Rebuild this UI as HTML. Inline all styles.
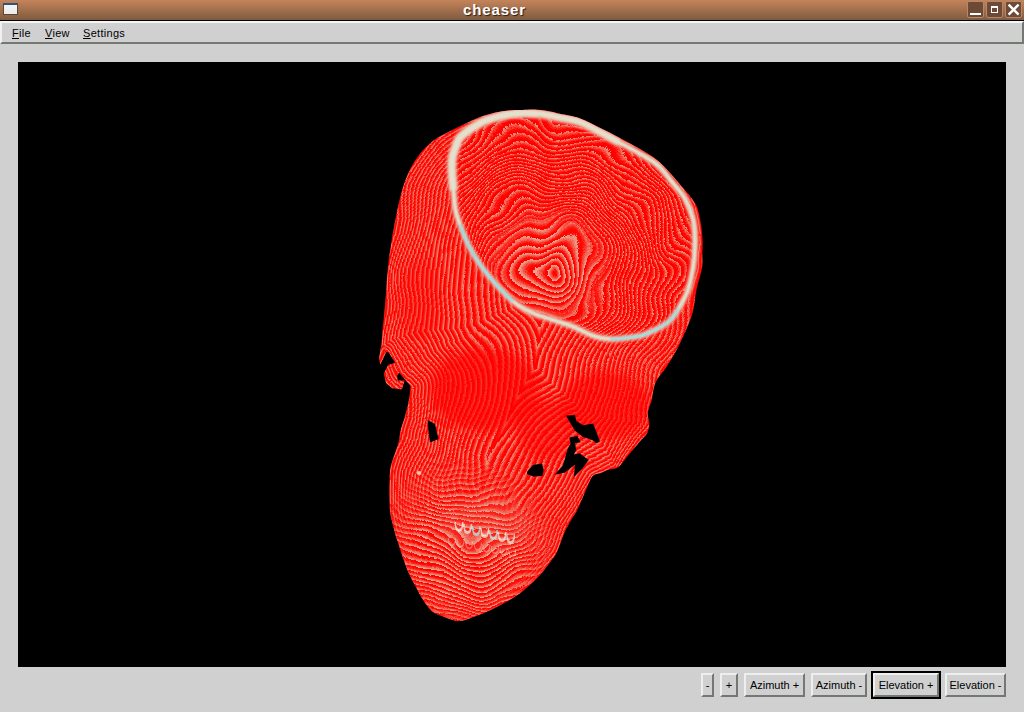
<!DOCTYPE html>
<html><head><meta charset="utf-8">
<style>
*{margin:0;padding:0;box-sizing:border-box}
html,body{width:1024px;height:712px;overflow:hidden;background:#d0d0d0;font-family:"Liberation Sans",sans-serif;position:relative}
.abs{position:absolute}
#title{left:0;top:0;width:1024px;height:20px;background:linear-gradient(#c4845a,#7e5a40)}
#tline{left:0;top:20px;width:1024px;height:1px;background:#000}
#ticon{left:3px;top:3px;width:15px;height:12px;background:linear-gradient(#f4f4f4,#ececec);border:1px solid #5a4634;border-top:2px solid #2c5480}
#ttext{left:463px;top:1px;text-align:left;color:#fff;font-weight:bold;font-size:15px;letter-spacing:0.9px;line-height:18px;text-shadow:1px 1px 1px #2a1a10}
.tb{top:1px;width:17px;height:17px;background:#6c4a36;border:1px solid #b8876a;border-radius:2px}
#menubar{left:0;top:21px;width:1024px;height:23px;background:#d0d0d0;border-top:2px solid #f4f4f4;border-left:2px solid #f0f0f0;border-bottom:2px solid #737873;border-right:2px solid #737873}
.mi{top:26px;font-size:11px;color:#000;line-height:14px;letter-spacing:0.3px}
.mi u{text-decoration:underline;text-underline-offset:1px;text-decoration-thickness:1px}
#canvas{left:18px;top:62px;width:988px;height:605px;background:#000;overflow:hidden}
.btn{top:673px;height:24px;background:#d0d0d0;border-top:2px solid #eeeeee;border-left:2px solid #eeeeee;border-bottom:2px solid #737873;border-right:2px solid #737873;font-size:11px;color:#000;text-align:center;line-height:20px;white-space:nowrap}
#focus{left:871px;top:671px;width:70px;height:28px;border:2px solid #000}
</style></head><body>
<div class="abs" id="title"></div>
<div class="abs" id="tline"></div>
<div class="abs" id="ticon"></div>
<div class="abs" id="ttext">cheaser</div>
<div class="abs tb" style="left:967px"><div class="abs" style="left:2px;top:11px;width:11px;height:2px;background:#fff"></div></div>
<div class="abs tb" style="left:986px"><div class="abs" style="left:4px;top:4px;width:7px;height:7px;border:1.5px solid #fff;border-top-width:2px"></div></div>
<div class="abs tb" style="left:1005px"><svg class="abs" style="left:0;top:0" width="15" height="15"><path d="M2.6 2.6 L12.6 12.6 M12.6 2.6 L2.6 12.6" stroke="#fff" stroke-width="2.4"/></svg></div>
<div class="abs" id="menubar"></div>
<div class="abs mi" style="left:12px"><u>F</u>ile</div>
<div class="abs mi" style="left:45px"><u>V</u>iew</div>
<div class="abs mi" style="left:83px"><u>S</u>ettings</div>
<div class="abs" id="canvas"></div>
<!-- SKULL --><svg class="abs" style="left:0;top:0" width="1024" height="712" viewBox="0 0 1024 712">
<defs>
<path id="ol" d="M522.5 110.0 C527.4 109.9 532.3 109.4 537.2 109.7 C542.1 110.0 548.0 111.0 551.8 111.7 C555.6 112.4 555.4 112.7 560.0 113.8 C564.6 114.9 573.2 115.9 579.7 118.2 C586.2 120.5 592.8 124.3 599.3 127.5 C605.8 130.7 612.4 134.0 619.0 137.4 C625.6 140.8 632.2 144.3 638.7 148.2 C645.2 152.1 651.5 155.1 658.3 161.0 C665.1 166.9 673.2 176.4 679.3 183.4 C685.4 190.4 691.5 197.1 695.0 203.0 C698.5 208.9 698.8 212.9 700.0 218.8 C701.2 224.7 702.1 232.5 702.5 238.5 C702.9 244.5 702.4 250.1 702.3 255.0 C702.2 259.9 703.0 262.2 702.0 268.0 C701.0 273.8 697.7 283.8 696.4 290.0 C695.1 296.2 695.0 300.8 694.1 305.4 C693.2 310.0 692.8 312.6 691.0 317.8 C689.2 323.0 685.9 330.6 683.3 336.3 C680.7 342.0 678.4 346.7 675.6 351.8 C672.8 356.9 669.6 362.1 666.3 367.2 C662.9 372.3 657.9 377.2 655.5 382.7 C653.1 388.2 652.7 396.0 651.7 400.0 C650.7 404.0 649.9 404.4 649.3 406.8 C648.6 409.2 647.8 411.2 647.8 414.2 C647.8 417.1 649.4 421.3 649.3 424.5 C649.2 427.7 648.3 430.9 647.1 433.3 C645.9 435.8 644.3 436.5 642.0 439.2 C639.7 441.9 635.8 446.4 633.1 449.6 C630.4 452.8 628.2 455.4 625.7 458.4 C623.2 461.3 621.0 465.4 618.3 467.3 C615.6 469.2 612.5 468.5 609.5 469.5 C606.5 470.5 603.3 472.2 600.6 473.2 C597.9 474.2 595.3 473.7 593.3 475.4 C591.3 477.1 590.3 480.4 588.8 483.5 C587.3 486.6 586.3 489.4 584.4 493.8 C582.5 498.2 580.2 504.2 577.2 510.0 C574.2 515.8 569.8 521.6 566.4 528.6 C563.0 535.6 559.7 546.4 557.1 551.8 C554.5 557.2 554.1 556.9 551.0 561.0 C547.9 565.1 543.8 571.1 538.6 576.5 C533.5 581.9 526.3 588.5 520.1 593.2 C513.9 597.9 506.6 601.7 501.3 604.6 C496.1 607.5 492.8 609.0 488.6 610.9 C484.4 612.8 480.1 614.4 475.9 616.0 C471.7 617.6 466.9 619.7 463.3 620.4 C459.7 621.1 458.0 621.1 454.4 620.4 C450.8 619.7 445.6 617.6 441.8 616.0 C438.0 614.4 434.8 613.6 431.6 610.9 C428.4 608.1 425.5 603.7 422.8 599.5 C420.1 595.3 417.7 590.5 415.2 585.6 C412.7 580.8 410.2 576.7 407.6 570.4 C405.0 564.1 402.0 555.0 399.7 548.0 C397.4 541.0 395.4 534.9 393.8 528.3 C392.2 521.7 390.5 517.8 389.8 508.6 C389.1 499.4 389.3 481.5 389.8 473.3 C390.3 465.1 391.3 464.8 392.8 459.5 C394.3 454.2 397.4 446.7 398.7 441.8 C400.0 436.9 399.6 434.1 400.6 430.0 C401.6 425.9 403.4 421.7 404.7 417.0 C406.0 412.3 407.7 406.0 408.6 401.8 L410.0 392.0 L410.5 386.0 L404.5 379.0 L399.5 373.0 L394.4 361.5 L388.7 352.4 L386.3 352.0 L380.3 364.7 L378.9 358.7 L380.3 351.0 C380.7 348.6 381.0 347.2 381.4 344.0 C381.8 340.8 381.8 338.7 382.4 331.7 C383.0 324.7 384.5 311.8 385.3 302.0 C386.1 292.2 386.4 282.5 387.4 272.7 C388.4 262.9 389.3 254.8 391.2 243.2 C393.1 231.6 396.1 214.4 398.8 203.0 C401.5 191.6 404.0 183.1 407.4 175.0 C410.8 166.9 414.8 160.5 419.2 154.7 C423.6 148.9 429.0 143.9 434.0 140.0 C439.0 136.1 444.3 134.1 449.3 131.5 C454.3 128.9 459.1 126.5 464.0 124.2 C468.9 121.9 473.7 119.5 478.6 117.6 C483.5 115.7 488.3 114.1 493.2 112.9 C498.1 111.7 503.0 111.0 507.9 110.5 C512.8 110.0 517.6 110.1 522.5 110.0 Z" fill="none" stroke-linejoin="round"/>
<clipPath id="sk"><path d="M522.5 110.0 C527.4 109.9 532.3 109.4 537.2 109.7 C542.1 110.0 548.0 111.0 551.8 111.7 C555.6 112.4 555.4 112.7 560.0 113.8 C564.6 114.9 573.2 115.9 579.7 118.2 C586.2 120.5 592.8 124.3 599.3 127.5 C605.8 130.7 612.4 134.0 619.0 137.4 C625.6 140.8 632.2 144.3 638.7 148.2 C645.2 152.1 651.5 155.1 658.3 161.0 C665.1 166.9 673.2 176.4 679.3 183.4 C685.4 190.4 691.5 197.1 695.0 203.0 C698.5 208.9 698.8 212.9 700.0 218.8 C701.2 224.7 702.1 232.5 702.5 238.5 C702.9 244.5 702.4 250.1 702.3 255.0 C702.2 259.9 703.0 262.2 702.0 268.0 C701.0 273.8 697.7 283.8 696.4 290.0 C695.1 296.2 695.0 300.8 694.1 305.4 C693.2 310.0 692.8 312.6 691.0 317.8 C689.2 323.0 685.9 330.6 683.3 336.3 C680.7 342.0 678.4 346.7 675.6 351.8 C672.8 356.9 669.6 362.1 666.3 367.2 C662.9 372.3 657.9 377.2 655.5 382.7 C653.1 388.2 652.7 396.0 651.7 400.0 C650.7 404.0 649.9 404.4 649.3 406.8 C648.6 409.2 647.8 411.2 647.8 414.2 C647.8 417.1 649.4 421.3 649.3 424.5 C649.2 427.7 648.3 430.9 647.1 433.3 C645.9 435.8 644.3 436.5 642.0 439.2 C639.7 441.9 635.8 446.4 633.1 449.6 C630.4 452.8 628.2 455.4 625.7 458.4 C623.2 461.3 621.0 465.4 618.3 467.3 C615.6 469.2 612.5 468.5 609.5 469.5 C606.5 470.5 603.3 472.2 600.6 473.2 C597.9 474.2 595.3 473.7 593.3 475.4 C591.3 477.1 590.3 480.4 588.8 483.5 C587.3 486.6 586.3 489.4 584.4 493.8 C582.5 498.2 580.2 504.2 577.2 510.0 C574.2 515.8 569.8 521.6 566.4 528.6 C563.0 535.6 559.7 546.4 557.1 551.8 C554.5 557.2 554.1 556.9 551.0 561.0 C547.9 565.1 543.8 571.1 538.6 576.5 C533.5 581.9 526.3 588.5 520.1 593.2 C513.9 597.9 506.6 601.7 501.3 604.6 C496.1 607.5 492.8 609.0 488.6 610.9 C484.4 612.8 480.1 614.4 475.9 616.0 C471.7 617.6 466.9 619.7 463.3 620.4 C459.7 621.1 458.0 621.1 454.4 620.4 C450.8 619.7 445.6 617.6 441.8 616.0 C438.0 614.4 434.8 613.6 431.6 610.9 C428.4 608.1 425.5 603.7 422.8 599.5 C420.1 595.3 417.7 590.5 415.2 585.6 C412.7 580.8 410.2 576.7 407.6 570.4 C405.0 564.1 402.0 555.0 399.7 548.0 C397.4 541.0 395.4 534.9 393.8 528.3 C392.2 521.7 390.5 517.8 389.8 508.6 C389.1 499.4 389.3 481.5 389.8 473.3 C390.3 465.1 391.3 464.8 392.8 459.5 C394.3 454.2 397.4 446.7 398.7 441.8 C400.0 436.9 399.6 434.1 400.6 430.0 C401.6 425.9 403.4 421.7 404.7 417.0 C406.0 412.3 407.7 406.0 408.6 401.8 L410.0 392.0 L410.5 386.0 L404.5 379.0 L399.5 373.0 L394.4 361.5 L388.7 352.4 L386.3 352.0 L380.3 364.7 L378.9 358.7 L380.3 351.0 C380.7 348.6 381.0 347.2 381.4 344.0 C381.8 340.8 381.8 338.7 382.4 331.7 C383.0 324.7 384.5 311.8 385.3 302.0 C386.1 292.2 386.4 282.5 387.4 272.7 C388.4 262.9 389.3 254.8 391.2 243.2 C393.1 231.6 396.1 214.4 398.8 203.0 C401.5 191.6 404.0 183.1 407.4 175.0 C410.8 166.9 414.8 160.5 419.2 154.7 C423.6 148.9 429.0 143.9 434.0 140.0 C439.0 136.1 444.3 134.1 449.3 131.5 C454.3 128.9 459.1 126.5 464.0 124.2 C468.9 121.9 473.7 119.5 478.6 117.6 C483.5 115.7 488.3 114.1 493.2 112.9 C498.1 111.7 503.0 111.0 507.9 110.5 C512.8 110.0 517.6 110.1 522.5 110.0 Z"/><path d="M388.0 365.0 L394.4 363.0 L398.0 364.4 L399.5 372.0 L398.6 373.5 L397.0 376.0 L397.9 380.5 L404.9 380.5 L404.2 382.0 L402.0 389.6 L392.2 388.2 L386.0 383.3 L383.8 373.5 Z"/></clipPath>
<radialGradient id="rg1" gradientUnits="userSpaceOnUse" cx="548" cy="270" r="7" spreadMethod="repeat"><stop offset="0" stop-color="#ff0000"/><stop offset="0.3" stop-color="#ff0600"/><stop offset="0.62" stop-color="#f65444"/><stop offset="0.9" stop-color="#eb9c88"/><stop offset="1" stop-color="#e6ae96"/></radialGradient>
<radialGradient id="rg3" gradientUnits="userSpaceOnUse" cx="548" cy="270" r="4.5" spreadMethod="repeat"><stop offset="0" stop-color="#ff0000"/><stop offset="0.4" stop-color="#ff0400"/><stop offset="0.75" stop-color="#f8483a"/><stop offset="1" stop-color="#ec9480"/></radialGradient>
<radialGradient id="mk" gradientUnits="userSpaceOnUse" cx="548" cy="268" r="65"><stop offset="0" stop-color="#fff"/><stop offset="0.55" stop-color="#fff"/><stop offset="1" stop-color="#000"/></radialGradient>
<radialGradient id="rg4" gradientUnits="userSpaceOnUse" cx="470" cy="420" r="5.5" spreadMethod="repeat"><stop offset="0" stop-color="#ff0000"/><stop offset="0.3" stop-color="#ff0600"/><stop offset="0.62" stop-color="#f65444"/><stop offset="0.9" stop-color="#eb9c88"/><stop offset="1" stop-color="#e6ae96"/></radialGradient>
<radialGradient id="mk2" gradientUnits="userSpaceOnUse" cx="465" cy="550" r="95"><stop offset="0" stop-color="#fff"/><stop offset="0.5" stop-color="#fff"/><stop offset="1" stop-color="#000"/></radialGradient>
<mask id="jm" maskUnits="userSpaceOnUse" x="340" y="80" width="400" height="580"><rect x="340" y="80" width="400" height="580" fill="url(#mk2)"/></mask>
<mask id="cm" maskUnits="userSpaceOnUse" x="340" y="80" width="400" height="580"><rect x="340" y="80" width="400" height="580" fill="url(#mk)"/></mask>
<radialGradient id="rg2" gradientUnits="userSpaceOnUse" cx="560" cy="900" r="4" spreadMethod="repeat"><stop offset="0" stop-color="#ff0000"/><stop offset="0.45" stop-color="#ff0400"/><stop offset="0.8" stop-color="#f8483a"/><stop offset="1" stop-color="#ee8c78"/></radialGradient>
<filter id="wv" x="360" y="90" width="360" height="550" filterUnits="userSpaceOnUse" color-interpolation-filters="sRGB">
<feTurbulence type="fractalNoise" baseFrequency="0.015" numOctaves="2" seed="5" result="n"/>
<feDisplacementMap in="SourceGraphic" in2="n" scale="50" xChannelSelector="R" yChannelSelector="G"/>
</filter>
<filter id="wv2" x="360" y="90" width="360" height="550" filterUnits="userSpaceOnUse" color-interpolation-filters="sRGB">
<feTurbulence type="fractalNoise" baseFrequency="0.01" numOctaves="2" seed="11" result="n"/>
<feDisplacementMap in="SourceGraphic" in2="n" scale="36" xChannelSelector="R" yChannelSelector="G"/>
</filter>
<filter id="bl1" x="-50%" y="-50%" width="200%" height="200%"><feGaussianBlur stdDeviation="1"/></filter>
<filter id="bl05" x="-50%" y="-50%" width="200%" height="200%"><feGaussianBlur stdDeviation="0.7"/></filter>
<filter id="bl4" x="-50%" y="-50%" width="200%" height="200%"><feGaussianBlur stdDeviation="5"/></filter>
<clipPath id="cr"><path d="M515.2 113.6 C522.5 112.9 529.9 113.0 537.2 113.6 C544.5 114.2 551.9 115.9 559.0 117.3 C566.1 118.7 573.3 119.6 580.0 122.0 C586.7 124.4 592.5 128.1 599.0 131.5 C605.5 134.9 612.4 138.7 619.0 142.3 C625.6 145.9 632.2 149.2 638.7 153.0 C645.2 156.8 652.5 160.6 658.0 165.4 C663.5 170.2 667.5 176.4 672.0 182.0 C676.5 187.6 681.7 192.9 685.2 199.0 C688.7 205.1 691.4 212.2 693.0 218.8 C694.6 225.4 694.8 232.5 695.0 238.5 C695.2 244.5 694.8 250.1 694.5 255.0 C694.2 259.9 694.1 262.2 693.0 268.0 C691.9 273.8 690.4 283.2 688.0 290.0 C685.6 296.8 681.8 303.3 678.7 308.5 C675.6 313.7 672.8 317.8 669.4 321.0 C666.0 324.2 663.0 325.7 658.6 328.0 C654.2 330.3 648.4 333.4 643.2 335.0 C638.1 336.6 633.2 337.1 627.7 337.8 C622.2 338.5 615.7 339.3 610.0 339.0 C604.3 338.7 600.1 338.2 593.7 336.0 C587.3 333.8 578.9 328.9 571.5 326.0 C564.1 323.1 556.3 321.0 549.6 318.7 C542.9 316.4 537.4 315.2 531.3 312.3 C525.2 309.4 519.1 306.2 513.0 301.3 C506.9 296.4 500.3 289.1 494.8 283.0 C489.3 276.9 484.5 270.9 480.2 264.8 C475.9 258.7 472.6 253.2 469.2 246.5 C465.8 239.8 462.3 230.7 460.0 224.6 C457.7 218.5 456.6 215.8 455.5 210.0 C454.4 204.2 454.1 196.2 453.5 190.0 C452.9 183.8 452.2 177.7 452.0 172.5 C451.8 167.3 451.5 163.0 452.2 158.6 C452.9 154.2 454.5 149.7 456.0 146.0 C457.5 142.3 457.2 140.3 461.0 136.6 C464.8 132.9 473.2 127.1 478.6 124.0 C484.0 120.9 487.1 119.7 493.2 118.0 C499.3 116.3 507.9 114.3 515.2 113.6 Z"/></clipPath>
</defs>
<g clip-path="url(#sk)">
<g filter="url(#wv2)">
<rect x="340" y="80" width="400" height="580" fill="#f64c3c"/>
<use href="#ol" stroke="#ff0000" stroke-width="393.8"/>
<use href="#ol" stroke="#ec8e7a" stroke-width="391.0"/>
<use href="#ol" stroke="#f65040" stroke-width="388.2"/>
<use href="#ol" stroke="#ff1a10" stroke-width="385.4"/>
<use href="#ol" stroke="#ff0400" stroke-width="382.6"/>
<use href="#ol" stroke="#ff0000" stroke-width="379.8"/>
<use href="#ol" stroke="#ec8e7a" stroke-width="377.0"/>
<use href="#ol" stroke="#f65040" stroke-width="374.2"/>
<use href="#ol" stroke="#ff1a10" stroke-width="371.4"/>
<use href="#ol" stroke="#ff0400" stroke-width="368.6"/>
<use href="#ol" stroke="#ff0000" stroke-width="365.8"/>
<use href="#ol" stroke="#ec8e7a" stroke-width="363.0"/>
<use href="#ol" stroke="#f65040" stroke-width="360.2"/>
<use href="#ol" stroke="#ff1a10" stroke-width="357.4"/>
<use href="#ol" stroke="#ff0400" stroke-width="354.6"/>
<use href="#ol" stroke="#ff0000" stroke-width="351.8"/>
<use href="#ol" stroke="#ec8e7a" stroke-width="349.0"/>
<use href="#ol" stroke="#f65040" stroke-width="346.2"/>
<use href="#ol" stroke="#ff1a10" stroke-width="343.4"/>
<use href="#ol" stroke="#ff0400" stroke-width="340.6"/>
<use href="#ol" stroke="#ff0000" stroke-width="337.8"/>
<use href="#ol" stroke="#ec8e7a" stroke-width="335.0"/>
<use href="#ol" stroke="#f65040" stroke-width="332.2"/>
<use href="#ol" stroke="#ff1a10" stroke-width="329.4"/>
<use href="#ol" stroke="#ff0400" stroke-width="326.6"/>
<use href="#ol" stroke="#ff0000" stroke-width="323.8"/>
<use href="#ol" stroke="#ec8e7a" stroke-width="321.1"/>
<use href="#ol" stroke="#f65040" stroke-width="318.3"/>
<use href="#ol" stroke="#ff1a10" stroke-width="315.5"/>
<use href="#ol" stroke="#ff0400" stroke-width="312.8"/>
<use href="#ol" stroke="#ff0000" stroke-width="310.0"/>
<use href="#ol" stroke="#ec8e7a" stroke-width="307.3"/>
<use href="#ol" stroke="#f65040" stroke-width="304.6"/>
<use href="#ol" stroke="#ff1a10" stroke-width="301.8"/>
<use href="#ol" stroke="#ff0400" stroke-width="299.1"/>
<use href="#ol" stroke="#ff0000" stroke-width="296.4"/>
<use href="#ol" stroke="#ec8e7a" stroke-width="293.7"/>
<use href="#ol" stroke="#f65040" stroke-width="291.1"/>
<use href="#ol" stroke="#ff1a10" stroke-width="288.4"/>
<use href="#ol" stroke="#ff0400" stroke-width="285.7"/>
<use href="#ol" stroke="#ff0000" stroke-width="283.0"/>
<use href="#ol" stroke="#ec8e7a" stroke-width="280.4"/>
<use href="#ol" stroke="#f65040" stroke-width="277.8"/>
<use href="#ol" stroke="#ff1a10" stroke-width="275.2"/>
<use href="#ol" stroke="#ff0400" stroke-width="272.5"/>
<use href="#ol" stroke="#ff0000" stroke-width="269.9"/>
<use href="#ol" stroke="#ec8e7a" stroke-width="267.3"/>
<use href="#ol" stroke="#f65040" stroke-width="264.8"/>
<use href="#ol" stroke="#ff1a10" stroke-width="262.2"/>
<use href="#ol" stroke="#ff0400" stroke-width="259.6"/>
<use href="#ol" stroke="#ff0000" stroke-width="257.0"/>
<use href="#ol" stroke="#ec8e7a" stroke-width="254.5"/>
<use href="#ol" stroke="#f65040" stroke-width="252.0"/>
<use href="#ol" stroke="#ff1a10" stroke-width="249.5"/>
<use href="#ol" stroke="#ff0400" stroke-width="246.9"/>
<use href="#ol" stroke="#ff0000" stroke-width="244.4"/>
<use href="#ol" stroke="#ec8e7a" stroke-width="241.9"/>
<use href="#ol" stroke="#f65040" stroke-width="239.4"/>
<use href="#ol" stroke="#ff1a10" stroke-width="237.0"/>
<use href="#ol" stroke="#ff0400" stroke-width="234.5"/>
<use href="#ol" stroke="#ff0000" stroke-width="232.0"/>
<use href="#ol" stroke="#ec8e7a" stroke-width="229.6"/>
<use href="#ol" stroke="#f65040" stroke-width="227.1"/>
<use href="#ol" stroke="#ff1a10" stroke-width="224.7"/>
<use href="#ol" stroke="#ff0400" stroke-width="222.3"/>
<use href="#ol" stroke="#ff0000" stroke-width="219.8"/>
<use href="#ol" stroke="#ec8e7a" stroke-width="217.5"/>
<use href="#ol" stroke="#f65040" stroke-width="215.1"/>
<use href="#ol" stroke="#ff1a10" stroke-width="212.7"/>
<use href="#ol" stroke="#ff0400" stroke-width="210.3"/>
<use href="#ol" stroke="#ff0000" stroke-width="207.9"/>
<use href="#ol" stroke="#ec8e7a" stroke-width="205.6"/>
<use href="#ol" stroke="#f65040" stroke-width="203.2"/>
<use href="#ol" stroke="#ff1a10" stroke-width="200.9"/>
<use href="#ol" stroke="#ff0400" stroke-width="198.6"/>
<use href="#ol" stroke="#ff0000" stroke-width="196.2"/>
<use href="#ol" stroke="#ec8e7a" stroke-width="194.0"/>
<use href="#ol" stroke="#f65040" stroke-width="191.7"/>
<use href="#ol" stroke="#ff1a10" stroke-width="189.4"/>
<use href="#ol" stroke="#ff0400" stroke-width="187.1"/>
<use href="#ol" stroke="#ff0000" stroke-width="184.8"/>
<use href="#ol" stroke="#ec8e7a" stroke-width="182.6"/>
<use href="#ol" stroke="#f65040" stroke-width="180.3"/>
<use href="#ol" stroke="#ff1a10" stroke-width="178.1"/>
<use href="#ol" stroke="#ff0400" stroke-width="175.8"/>
<use href="#ol" stroke="#ff0000" stroke-width="173.6"/>
<use href="#ol" stroke="#ec8e7a" stroke-width="171.4"/>
<use href="#ol" stroke="#f65040" stroke-width="169.2"/>
<use href="#ol" stroke="#ff1a10" stroke-width="167.0"/>
<use href="#ol" stroke="#ff0400" stroke-width="164.8"/>
<use href="#ol" stroke="#ff0000" stroke-width="162.6"/>
<use href="#ol" stroke="#ec8e7a" stroke-width="160.5"/>
<use href="#ol" stroke="#f65040" stroke-width="158.4"/>
<use href="#ol" stroke="#ff1a10" stroke-width="156.2"/>
<use href="#ol" stroke="#ff0400" stroke-width="154.1"/>
<use href="#ol" stroke="#ff0000" stroke-width="151.9"/>
<use href="#ol" stroke="#ec8e7a" stroke-width="149.8"/>
<use href="#ol" stroke="#f65040" stroke-width="147.7"/>
<use href="#ol" stroke="#ff1a10" stroke-width="145.6"/>
<use href="#ol" stroke="#ff0400" stroke-width="143.5"/>
<use href="#ol" stroke="#ff0000" stroke-width="141.4"/>
<use href="#ol" stroke="#ec8e7a" stroke-width="139.4"/>
<use href="#ol" stroke="#f65040" stroke-width="137.3"/>
<use href="#ol" stroke="#ff1a10" stroke-width="135.3"/>
<use href="#ol" stroke="#ff0400" stroke-width="133.2"/>
<use href="#ol" stroke="#ff0000" stroke-width="131.2"/>
<use href="#ol" stroke="#ec8e7a" stroke-width="129.2"/>
<use href="#ol" stroke="#f65040" stroke-width="127.2"/>
<use href="#ol" stroke="#ff1a10" stroke-width="125.2"/>
<use href="#ol" stroke="#ff0400" stroke-width="123.2"/>
<use href="#ol" stroke="#ff0000" stroke-width="121.2"/>
<use href="#ol" stroke="#ec8e7a" stroke-width="119.2"/>
<use href="#ol" stroke="#f65040" stroke-width="117.3"/>
<use href="#ol" stroke="#ff1a10" stroke-width="115.3"/>
<use href="#ol" stroke="#ff0400" stroke-width="113.4"/>
<use href="#ol" stroke="#ff0000" stroke-width="111.4"/>
<use href="#ol" stroke="#ec8e7a" stroke-width="109.5"/>
<use href="#ol" stroke="#f65040" stroke-width="107.6"/>
<use href="#ol" stroke="#ff1a10" stroke-width="105.7"/>
<use href="#ol" stroke="#ff0400" stroke-width="103.8"/>
<use href="#ol" stroke="#ff0000" stroke-width="101.9"/>
<use href="#ol" stroke="#ec8e7a" stroke-width="100.1"/>
<use href="#ol" stroke="#f65040" stroke-width="98.2"/>
<use href="#ol" stroke="#ff1a10" stroke-width="96.4"/>
<use href="#ol" stroke="#ff0400" stroke-width="94.5"/>
<use href="#ol" stroke="#ff0000" stroke-width="92.6"/>
<use href="#ol" stroke="#ec8e7a" stroke-width="90.8"/>
<use href="#ol" stroke="#f65040" stroke-width="89.0"/>
<use href="#ol" stroke="#ff1a10" stroke-width="87.2"/>
<use href="#ol" stroke="#ff0400" stroke-width="85.4"/>
<use href="#ol" stroke="#ff0000" stroke-width="83.6"/>
<use href="#ol" stroke="#ec8e7a" stroke-width="81.8"/>
<use href="#ol" stroke="#f65040" stroke-width="80.1"/>
<use href="#ol" stroke="#ff1a10" stroke-width="78.3"/>
<use href="#ol" stroke="#ff0400" stroke-width="76.6"/>
<use href="#ol" stroke="#ff0000" stroke-width="74.8"/>
<use href="#ol" stroke="#ec8e7a" stroke-width="73.1"/>
<use href="#ol" stroke="#f65040" stroke-width="71.4"/>
<use href="#ol" stroke="#ff1a10" stroke-width="69.7"/>
<use href="#ol" stroke="#ff0400" stroke-width="68.0"/>
<use href="#ol" stroke="#ff0000" stroke-width="66.2"/>
<use href="#ol" stroke="#ec8e7a" stroke-width="64.6"/>
<use href="#ol" stroke="#f65040" stroke-width="62.9"/>
<use href="#ol" stroke="#ff1a10" stroke-width="61.2"/>
<use href="#ol" stroke="#ff0400" stroke-width="59.6"/>
<use href="#ol" stroke="#ff0000" stroke-width="57.9"/>
<use href="#ol" stroke="#ec8e7a" stroke-width="56.3"/>
<use href="#ol" stroke="#f65040" stroke-width="54.7"/>
<use href="#ol" stroke="#ff1a10" stroke-width="53.1"/>
<use href="#ol" stroke="#ff0400" stroke-width="51.5"/>
<use href="#ol" stroke="#ff0000" stroke-width="49.8"/>
<use href="#ol" stroke="#ec8e7a" stroke-width="48.3"/>
<use href="#ol" stroke="#f65040" stroke-width="46.7"/>
<use href="#ol" stroke="#ff1a10" stroke-width="45.1"/>
<use href="#ol" stroke="#ff0400" stroke-width="43.6"/>
<use href="#ol" stroke="#ff0000" stroke-width="42.0"/>
<use href="#ol" stroke="#ec8e7a" stroke-width="40.5"/>
<use href="#ol" stroke="#f65040" stroke-width="39.0"/>
<use href="#ol" stroke="#ff1a10" stroke-width="37.4"/>
<use href="#ol" stroke="#ff0400" stroke-width="35.9"/>
<use href="#ol" stroke="#ff0000" stroke-width="34.4"/>
<use href="#ol" stroke="#ec8e7a" stroke-width="32.9"/>
<use href="#ol" stroke="#f65040" stroke-width="31.5"/>
<use href="#ol" stroke="#ff1a10" stroke-width="30.0"/>
<use href="#ol" stroke="#ff0400" stroke-width="28.5"/>
<use href="#ol" stroke="#ff0000" stroke-width="27.0"/>
<use href="#ol" stroke="#ec8e7a" stroke-width="25.6"/>
<use href="#ol" stroke="#f65040" stroke-width="24.2"/>
<use href="#ol" stroke="#ff1a10" stroke-width="22.8"/>
<use href="#ol" stroke="#ff0400" stroke-width="21.3"/>
<use href="#ol" stroke="#ff0000" stroke-width="19.9"/>
<use href="#ol" stroke="#ec8e7a" stroke-width="18.5"/>
<use href="#ol" stroke="#f65040" stroke-width="17.2"/>
<use href="#ol" stroke="#ff1a10" stroke-width="15.8"/>
<use href="#ol" stroke="#ff0400" stroke-width="14.4"/>
<use href="#ol" stroke="#ff0000" stroke-width="13.0"/>
<use href="#ol" stroke="#ec8e7a" stroke-width="11.7"/>
<use href="#ol" stroke="#f65040" stroke-width="10.4"/>
<use href="#ol" stroke="#ff1a10" stroke-width="9.1"/>
<use href="#ol" stroke="#ff0400" stroke-width="7.7"/>
<use href="#ol" stroke="#ff0000" stroke-width="6.4"/>
<use href="#ol" stroke="#ec8e7a" stroke-width="5.1"/>
<use href="#ol" stroke="#f65040" stroke-width="3.8"/>
<use href="#ol" stroke="#ff1a10" stroke-width="2.6"/>
<use href="#ol" stroke="#ff0400" stroke-width="1.3"/>
</g>
<g mask="url(#jm)"><g filter="url(#wv)"><rect x="340" y="80" width="400" height="580" fill="url(#rg4)"/></g></g>
<g clip-path="url(#cr)"><g filter="url(#wv)"><rect x="340" y="80" width="400" height="580" fill="url(#rg3)"/></g><g mask="url(#cm)"><g filter="url(#wv)"><rect x="340" y="80" width="400" height="580" fill="url(#rg1)"/></g></g></g>
<g filter="url(#bl4)">
<ellipse cx="485" cy="390" rx="55" ry="42" fill="#ff0000" opacity="0.62"/>
<ellipse cx="605" cy="405" rx="45" ry="34" fill="#ff0000" opacity="0.6"/>
<ellipse cx="545" cy="430" rx="28" ry="30" fill="#ff0000" opacity="0.5"/>
<ellipse cx="420" cy="300" rx="22" ry="40" fill="#ff0000" opacity="0.3"/>
</g>
<g filter="url(#bl4)">
<ellipse cx="485" cy="525" rx="45" ry="28" fill="#f07868" opacity="0.25"/>
</g>
<g filter="url(#bl05)">
<path d="M454.5 522.0 Q454.5 532.0 459.0 532.0 Q463.5 532.0 463.5 522.0 L462.0 522.0 Q462.0 529.0 459.0 529.0 Q456.0 529.0 456.0 522.0 Z" fill="#f8fff8" opacity="0.7"/>
<path d="M463.1 524.0 Q463.1 534.0 467.6 534.0 Q472.1 534.0 472.1 524.0 L470.6 524.0 Q470.6 531.0 467.6 531.0 Q464.6 531.0 464.6 524.0 Z" fill="#d8fff8" opacity="0.7"/>
<path d="M471.7 526.0 Q471.7 536.0 476.2 536.0 Q480.7 536.0 480.7 526.0 L479.2 526.0 Q479.2 533.0 476.2 533.0 Q473.2 533.0 473.2 526.0 Z" fill="#a8f8f4" opacity="0.7"/>
<path d="M480.3 528.0 Q480.3 538.0 484.8 538.0 Q489.3 538.0 489.3 528.0 L487.8 528.0 Q487.8 535.0 484.8 535.0 Q481.8 535.0 481.8 528.0 Z" fill="#f4fff0" opacity="0.7"/>
<path d="M488.9 530.0 Q488.9 540.0 493.4 540.0 Q497.9 540.0 497.9 530.0 L496.4 530.0 Q496.4 537.0 493.4 537.0 Q490.4 537.0 490.4 530.0 Z" fill="#b8f8f0" opacity="0.7"/>
<path d="M497.5 532.0 Q497.5 542.0 502.0 542.0 Q506.5 542.0 506.5 532.0 L505.0 532.0 Q505.0 539.0 502.0 539.0 Q499.0 539.0 499.0 532.0 Z" fill="#f4f8e8" opacity="0.7"/>
<path d="M506.1 534.0 Q506.1 544.0 510.6 544.0 Q515.1 544.0 515.1 534.0 L513.6 534.0 Q513.6 541.0 510.6 541.0 Q507.6 541.0 507.6 534.0 Z" fill="#e0f4e4" opacity="0.7"/>
<path d="M448.0 538.0 Q448.0 546.0 452.0 546.0 Q456.0 546.0 456.0 538.0 L455.0 538.0 Q455.0 544.5 452.0 544.5 Q449.0 544.5 449.0 538.0 Z" fill="#f8d8c8" opacity="0.45"/>
<path d="M456.6 539.6 Q456.6 547.6 460.6 547.6 Q464.6 547.6 464.6 539.6 L463.6 539.6 Q463.6 546.1 460.6 546.1 Q457.6 546.1 457.6 539.6 Z" fill="#f8d8c8" opacity="0.45"/>
<path d="M465.2 541.2 Q465.2 549.2 469.2 549.2 Q473.2 549.2 473.2 541.2 L472.2 541.2 Q472.2 547.7 469.2 547.7 Q466.2 547.7 466.2 541.2 Z" fill="#f8d8c8" opacity="0.45"/>
<path d="M473.8 542.8 Q473.8 550.8 477.8 550.8 Q481.8 550.8 481.8 542.8 L480.8 542.8 Q480.8 549.3 477.8 549.3 Q474.8 549.3 474.8 542.8 Z" fill="#f8d8c8" opacity="0.45"/>
<path d="M482.4 544.4 Q482.4 552.4 486.4 552.4 Q490.4 552.4 490.4 544.4 L489.4 544.4 Q489.4 550.9 486.4 550.9 Q483.4 550.9 483.4 544.4 Z" fill="#f8d8c8" opacity="0.45"/>
<path d="M491.0 546.0 Q491.0 554.0 495.0 554.0 Q499.0 554.0 499.0 546.0 L498.0 546.0 Q498.0 552.5 495.0 552.5 Q492.0 552.5 492.0 546.0 Z" fill="#f8d8c8" opacity="0.45"/>
<path d="M499.6 547.6 Q499.6 555.6 503.6 555.6 Q507.6 555.6 507.6 547.6 L506.6 547.6 Q506.6 554.1 503.6 554.1 Q500.6 554.1 500.6 547.6 Z" fill="#f8d8c8" opacity="0.45"/>
<path d="M508.2 549.2 Q508.2 557.2 512.2 557.2 Q516.2 557.2 516.2 549.2 L515.2 549.2 Q515.2 555.7 512.2 555.7 Q509.2 555.7 509.2 549.2 Z" fill="#f8d8c8" opacity="0.45"/>
<ellipse cx="419" cy="473" rx="2.5" ry="2" fill="#f0e0d0" opacity="0.8"/>
</g>
<g filter="url(#bl1)">
<path d="M515.2 113.6 C522.5 112.9 529.9 113.0 537.2 113.6 C544.5 114.2 551.9 115.9 559.0 117.3 C566.1 118.7 573.3 119.6 580.0 122.0 C586.7 124.4 592.5 128.1 599.0 131.5 C605.5 134.9 612.4 138.7 619.0 142.3 C625.6 145.9 632.2 149.2 638.7 153.0 C645.2 156.8 652.5 160.6 658.0 165.4 C663.5 170.2 667.5 176.4 672.0 182.0 C676.5 187.6 681.7 192.9 685.2 199.0 C688.7 205.1 691.4 212.2 693.0 218.8 C694.6 225.4 694.8 232.5 695.0 238.5 C695.2 244.5 694.8 250.1 694.5 255.0 C694.2 259.9 694.1 262.2 693.0 268.0 C691.9 273.8 690.4 283.2 688.0 290.0 C685.6 296.8 681.8 303.3 678.7 308.5 C675.6 313.7 672.8 317.8 669.4 321.0 C666.0 324.2 663.0 325.7 658.6 328.0 C654.2 330.3 648.4 333.4 643.2 335.0 C638.1 336.6 633.2 337.1 627.7 337.8 C622.2 338.5 615.7 339.3 610.0 339.0 C604.3 338.7 600.1 338.2 593.7 336.0 C587.3 333.8 578.9 328.9 571.5 326.0 C564.1 323.1 556.3 321.0 549.6 318.7 C542.9 316.4 537.4 315.2 531.3 312.3 C525.2 309.4 519.1 306.2 513.0 301.3 C506.9 296.4 500.3 289.1 494.8 283.0 C489.3 276.9 484.5 270.9 480.2 264.8 C475.9 258.7 472.6 253.2 469.2 246.5 C465.8 239.8 462.3 230.7 460.0 224.6 C457.7 218.5 456.6 215.8 455.5 210.0 C454.4 204.2 454.1 196.2 453.5 190.0 C452.9 183.8 452.2 177.7 452.0 172.5 C451.8 167.3 451.5 163.0 452.2 158.6 C452.9 154.2 454.5 149.7 456.0 146.0 C457.5 142.3 457.2 140.3 461.0 136.6 C464.8 132.9 473.2 127.1 478.6 124.0 C484.0 120.9 487.1 119.7 493.2 118.0 C499.3 116.3 507.9 114.3 515.2 113.6 Z" fill="none" stroke="#f08a78" stroke-width="8" opacity="0.75"/>
<path d="M453.5 190.0 C452.9 183.8 452.2 177.7 452.0 172.5 C451.8 167.3 451.5 163.0 452.2 158.6 C452.9 154.2 454.5 149.7 456.0 146.0 C457.5 142.3 457.2 140.3 461.0 136.6 C464.8 132.9 473.2 127.1 478.6 124.0 C484.0 120.9 487.1 119.7 493.2 118.0 C499.3 116.3 507.9 114.3 515.2 113.6 C522.5 112.9 529.9 113.0 537.2 113.6 C544.5 114.2 551.9 115.9 559.0 117.3 C566.1 118.7 573.3 119.6 580.0 122.0 C586.7 124.4 592.5 128.1 599.0 131.5 C605.5 134.9 612.4 138.7 619.0 142.3" fill="none" stroke="#f0a090" stroke-width="11" opacity="0.7"/>
<path d="M515.2 113.6 C522.5 112.9 529.9 113.0 537.2 113.6 C544.5 114.2 551.9 115.9 559.0 117.3 C566.1 118.7 573.3 119.6 580.0 122.0 C586.7 124.4 592.5 128.1 599.0 131.5 C605.5 134.9 612.4 138.7 619.0 142.3 C625.6 145.9 632.2 149.2 638.7 153.0 C645.2 156.8 652.5 160.6 658.0 165.4 C663.5 170.2 667.5 176.4 672.0 182.0 C676.5 187.6 681.7 192.9 685.2 199.0 C688.7 205.1 691.4 212.2 693.0 218.8 C694.6 225.4 694.8 232.5 695.0 238.5 C695.2 244.5 694.8 250.1 694.5 255.0 C694.2 259.9 694.1 262.2 693.0 268.0 C691.9 273.8 690.4 283.2 688.0 290.0 C685.6 296.8 681.8 303.3 678.7 308.5 C675.6 313.7 672.8 317.8 669.4 321.0 C666.0 324.2 663.0 325.7 658.6 328.0 C654.2 330.3 648.4 333.4 643.2 335.0 C638.1 336.6 633.2 337.1 627.7 337.8 C622.2 338.5 615.7 339.3 610.0 339.0 C604.3 338.7 600.1 338.2 593.7 336.0 C587.3 333.8 578.9 328.9 571.5 326.0 C564.1 323.1 556.3 321.0 549.6 318.7 C542.9 316.4 537.4 315.2 531.3 312.3 C525.2 309.4 519.1 306.2 513.0 301.3 C506.9 296.4 500.3 289.1 494.8 283.0 C489.3 276.9 484.5 270.9 480.2 264.8 C475.9 258.7 472.6 253.2 469.2 246.5 C465.8 239.8 462.3 230.7 460.0 224.6 C457.7 218.5 456.6 215.8 455.5 210.0 C454.4 204.2 454.1 196.2 453.5 190.0 C452.9 183.8 452.2 177.7 452.0 172.5 C451.8 167.3 451.5 163.0 452.2 158.6 C452.9 154.2 454.5 149.7 456.0 146.0 C457.5 142.3 457.2 140.3 461.0 136.6 C464.8 132.9 473.2 127.1 478.6 124.0 C484.0 120.9 487.1 119.7 493.2 118.0 C499.3 116.3 507.9 114.3 515.2 113.6 Z" fill="none" stroke="#dcecd8" stroke-width="3.6"/>
<path d="M453.5 190.0 C452.9 183.8 452.2 177.7 452.0 172.5 C451.8 167.3 451.5 163.0 452.2 158.6 C452.9 154.2 454.5 149.7 456.0 146.0 C457.5 142.3 457.2 140.3 461.0 136.6 C464.8 132.9 473.2 127.1 478.6 124.0 C484.0 120.9 487.1 119.7 493.2 118.0 C499.3 116.3 507.9 114.3 515.2 113.6 C522.5 112.9 529.9 113.0 537.2 113.6" fill="none" stroke="#e4e0cc" stroke-width="7"/>
<path d="M515.2 113.6 C522.5 112.9 529.9 113.0 537.2 113.6 C544.5 114.2 551.9 115.9 559.0 117.3 C566.1 118.7 573.3 119.6 580.0 122.0 C586.7 124.4 592.5 128.1 599.0 131.5 C605.5 134.9 612.4 138.7 619.0 142.3" fill="none" stroke="#e4e0cc" stroke-width="6"/>
<path d="M513.0 301.3 C506.9 296.4 500.3 289.1 494.8 283.0 C489.3 276.9 484.5 270.9 480.2 264.8 C475.9 258.7 472.6 253.2 469.2 246.5 C465.8 239.8 462.3 230.7 460.0 224.6" fill="none" stroke="#70e8f0" stroke-width="2.2"/>
<path d="M678.7 308.5 C675.6 313.7 672.8 317.8 669.4 321.0 C666.0 324.2 663.0 325.7 658.6 328.0 C654.2 330.3 648.4 333.4 643.2 335.0 C638.1 336.6 633.2 337.1 627.7 337.8 C622.2 338.5 615.7 339.3 610.0 339.0" fill="none" stroke="#70e8f0" stroke-width="2"/>
</g>
</g>
<path d="M566.0 415.7 L575.0 415.1 L576.2 420.7 L583.0 425.2 L593.0 423.5 L596.4 432.0 L599.8 441.0 L596.4 443.2 L591.9 439.8 L583.0 437.0 L579.6 434.2 L575.0 430.8 L571.7 425.2 Z" fill="#000"/>
<path d="M569.4 437.6 L577.3 435.9 L580.7 442.1 L575.0 443.2 L576.2 450.0 L573.9 454.4 L579.6 453.3 L588.5 460.0 L582.9 467.9 L573.9 476.9 L575.0 464.6 L564.9 472.4 L554.8 474.7 L562.7 465.7 L564.9 458.9 L567.2 450.0 L570.6 443.2 Z" fill="#000"/>
<path d="M527.0 472.0 L533.0 465.0 L542.0 463.5 L543.6 470.0 L542.5 476.0 L533.5 476.5 L527.0 474.0 Z" fill="#000"/>
<path d="M427.5 420.0 L435.0 424.0 L438.5 439.0 L430.0 442.5 L428.5 432.0 Z" fill="#000"/>
</svg><!-- /SKULL -->
<div class="abs btn" style="left:701px;width:13px">-</div>
<div class="abs btn" style="left:720px;width:18px">+</div>
<div class="abs btn" style="left:744px;width:61px">Azimuth +</div>
<div class="abs btn" style="left:811px;width:56px">Azimuth -</div>
<div class="abs" id="focus"></div>
<div class="abs btn" style="left:873px;width:66px">Elevation +</div>
<div class="abs btn" style="left:945px;width:61px">Elevation -</div>
</body></html>
